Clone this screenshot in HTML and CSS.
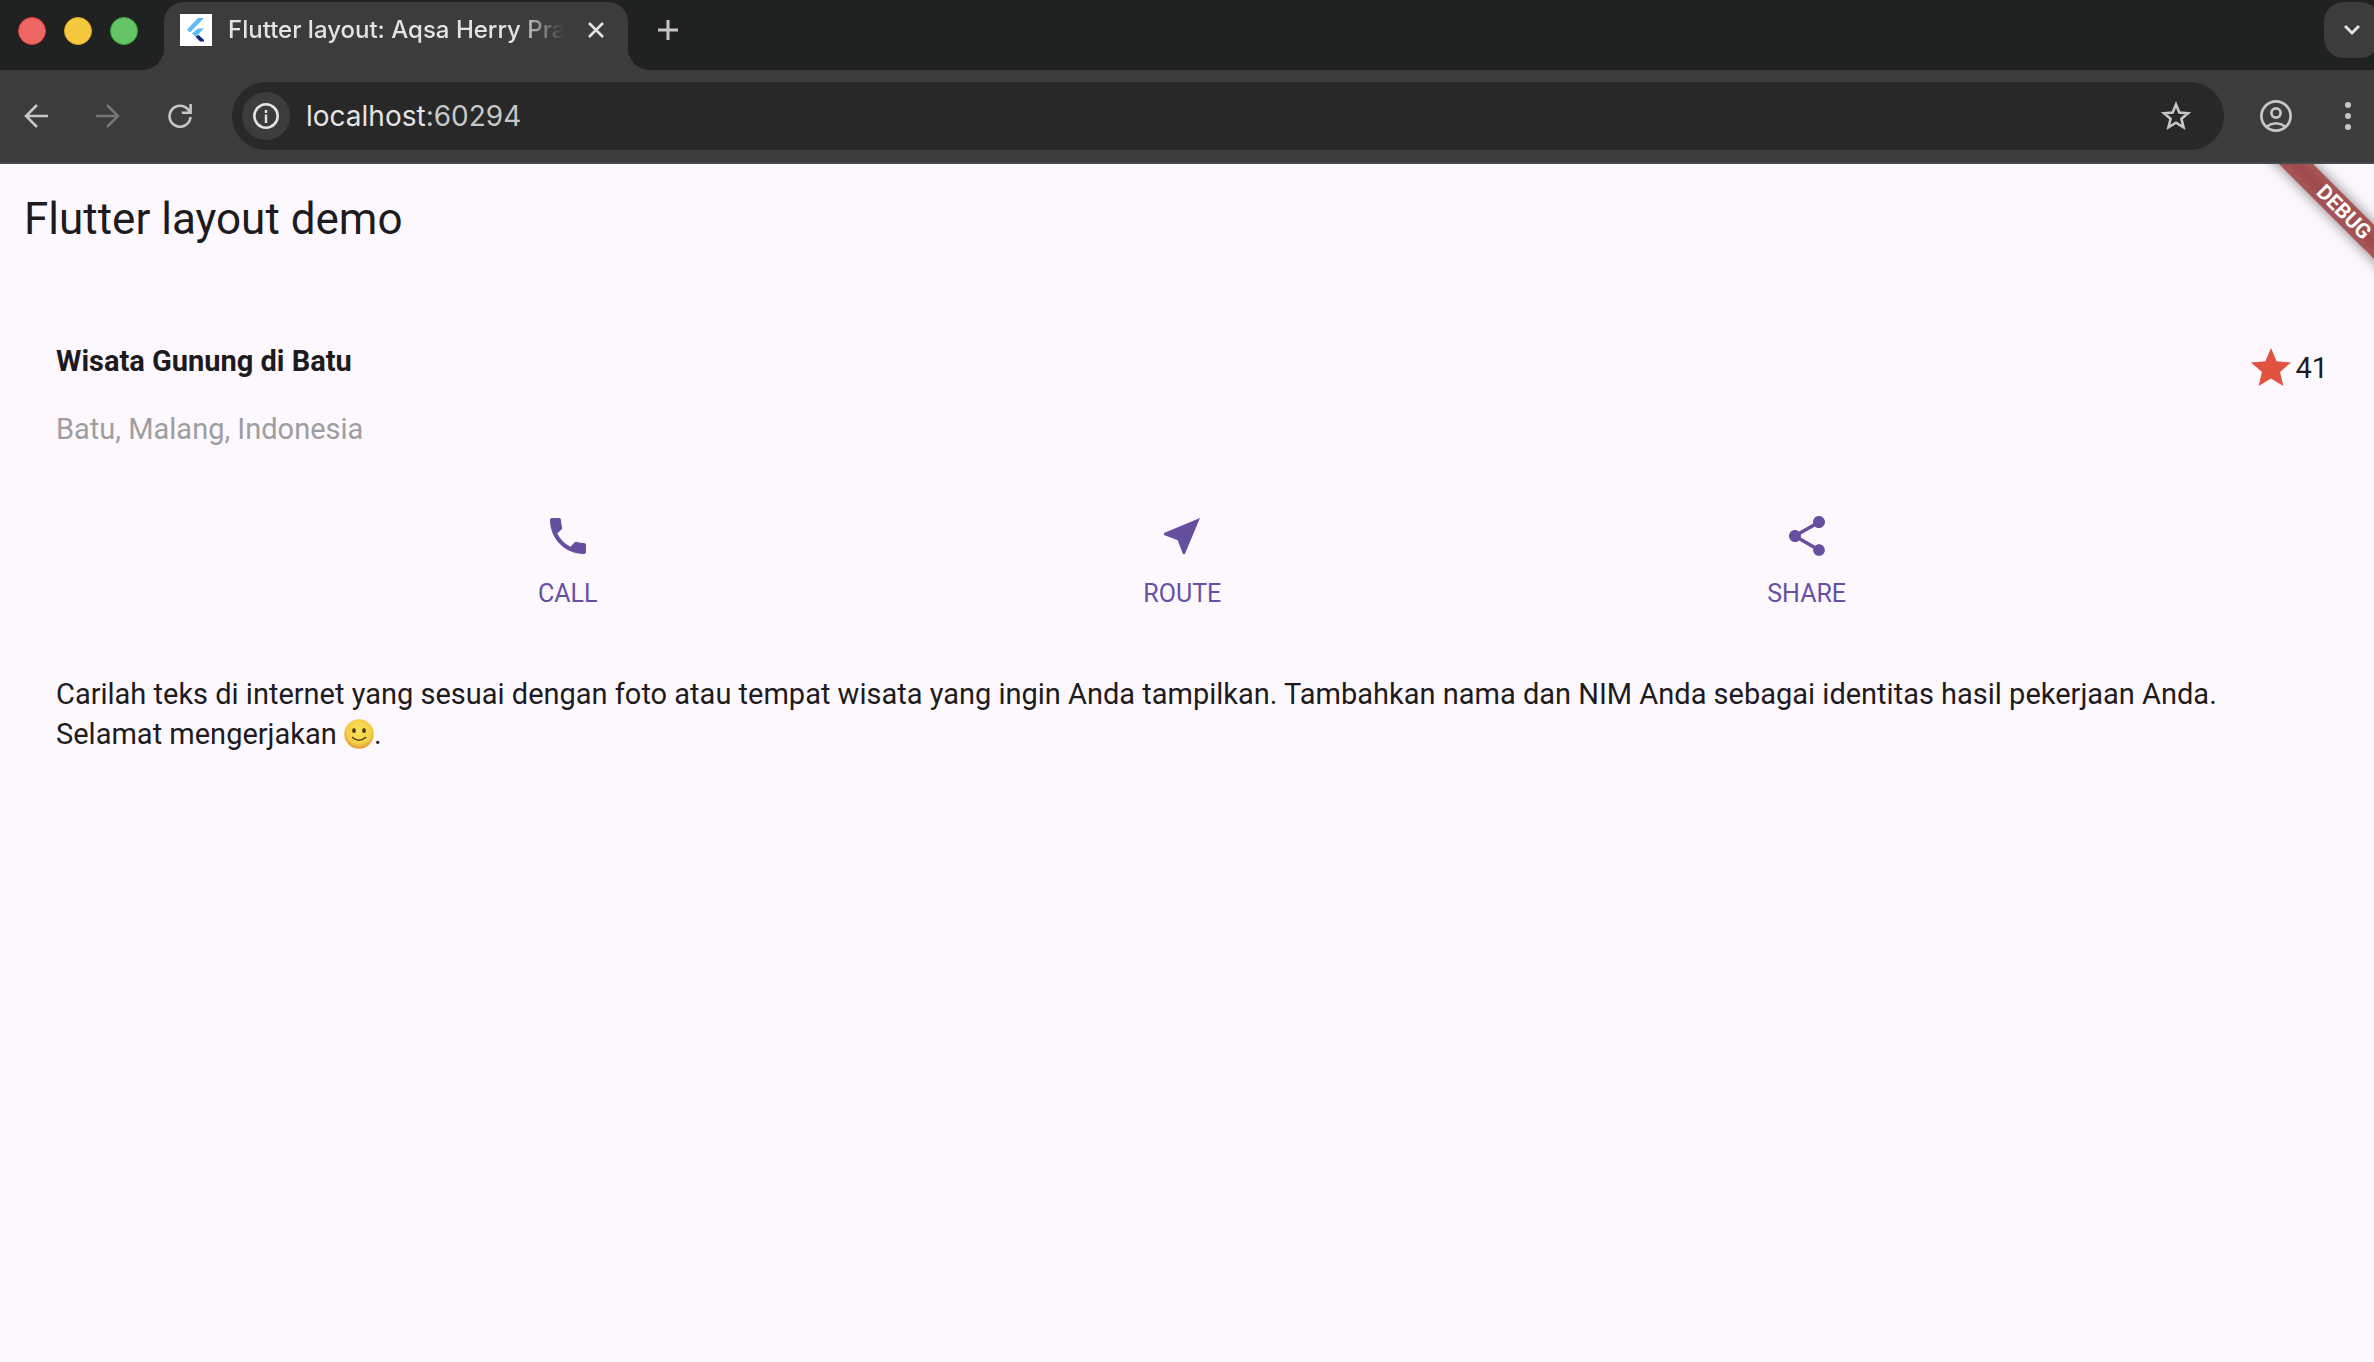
FILE: index.html
```html
<!DOCTYPE html>
<html lang="id">
<head>
<meta charset="utf-8">
<meta name="viewport" content="width=device-width, initial-scale=1">
<title>Flutter layout: Aqsa Herry Pra</title>
<link rel="stylesheet" href="styles.css">
</head>
<body>
<header class="browser">
  <div class="tab-strip">
    <div class="window-controls">
      <button class="dot dot-close" aria-label="Close window"></button>
      <button class="dot dot-min" aria-label="Minimize window"></button>
      <button class="dot dot-max" aria-label="Maximize window"></button>
    </div>
    <div class="tab">
      <svg class="favicon" viewBox="0 0 32 32" aria-hidden="true">
        <rect width="32" height="32" fill="#fff"/>
        <path d="M18 4h6L10 18.500l-3-3z" fill="#5bbcf5"/>
        <path d="M18 14.500h6l-5 5-3.500 3-3.500-3z" fill="#5bbcf5"/>
        <path d="M15.500 22.500l3-1.500 5.500 5v1.500h-4z" fill="#0b1f86"/>
      </svg>
      <span class="tab-title">Flutter layout: Aqsa Herry Pra</span>
      <button class="tab-close" aria-label="Close tab">
        <svg viewBox="0 0 16 16" width="16" height="16"><path d="M1 1l14 14M15 1L1 15" stroke="#e3e3e3" stroke-width="2.600" fill="none"/></svg>
      </button>
    </div>
    <button class="new-tab" aria-label="New tab">
      <svg viewBox="0 0 20 20" width="20" height="20"><path d="M10 0v20M0 10h20" stroke="#c7c7c7" stroke-width="3" fill="none"/></svg>
    </button>
    <button class="tab-search" aria-label="Search tabs">
      <svg viewBox="0 0 16 12" width="16" height="12"><path d="M1 2l7 7 7-7" stroke="#e3e3e3" stroke-width="3" fill="none"/></svg>
    </button>
  </div>
  <div class="toolbar">
    <nav class="history">
      <button aria-label="Back"><svg viewBox="0 0 24 24" width="24" height="24"><path d="M24 12H2M13 1L2 12l11 11" stroke="#c7c7c7" stroke-width="2.600" fill="none"/></svg></button>
      <button aria-label="Forward"><svg viewBox="0 0 24 24" width="24" height="24"><path d="M0 12h22M11 1l11 11-11 11" stroke="#757575" stroke-width="2.600" fill="none"/></svg></button>
      <button aria-label="Reload"><svg viewBox="0 0 24 24" width="24" height="24"><path d="M22.500 13A10.500 10.500 0 1 1 20.500 6l2 2.500M22.600 0v8.700h-8.800" stroke="#c7c7c7" stroke-width="2.600" fill="none"/></svg></button>
    </nav>
    <div class="address">
      <button class="site-info" aria-label="Site information">
        <svg viewBox="0 0 26 26" width="26" height="26"><circle cx="13" cy="13" r="11.700" stroke="#e3e3e3" stroke-width="2.600" fill="none"/><path d="M13 11.500V20M13 7v3" stroke="#e3e3e3" stroke-width="2.400"/></svg>
      </button>
      <a class="url" href="#">localhost<span class="port">:60294</span></a>
      <button class="bookmark" aria-label="Bookmark this tab">
        <svg viewBox="0 0 32 30" width="32" height="30"><path d="M16 3.500l3.300 8 8.700.7-6.600 5.600 2.100 8.500-7.500-4.600-7.500 4.600 2.100-8.500L4 12.200l8.700-.7z" stroke="#c7c7c7" stroke-width="2.600" fill="none"/></svg>
      </button>
    </div>
    <button class="profile" aria-label="Profile">
      <svg viewBox="0 0 32 32" width="32" height="32" fill="none" stroke="#c7c7c7" stroke-width="2.700"><circle cx="16" cy="16" r="14.600"/><circle cx="16" cy="13" r="4.600"/><path d="M6.500 26.500q9.500-6.500 19 0"/></svg>
    </button>
    <button class="menu" aria-label="Browser menu">
      <svg viewBox="0 0 6 28" width="6" height="28" fill="#c7c7c7"><circle cx="3" cy="3" r="3"/><circle cx="3" cy="14" r="3"/><circle cx="3" cy="25" r="3"/></svg>
    </button>
  </div>
</header>
<main class="app">
  <div class="debug-banner">DEBUG</div>
  <div class="app-bar"><h1>Flutter layout demo</h1></div>
  <section class="title-section">
    <div>
      <h2>Wisata Gunung di Batu</h2>
      <p class="place">Batu, Malang, Indonesia</p>
    </div>
    <div class="rating">
      <svg viewBox="0 0 24 24" width="48" height="48" fill="#e25241" aria-hidden="true"><path d="M12 17.270L18.180 21l-1.640-7.030L22 9.240l-7.190-.61L12 2 9.190 8.630 2 9.240l5.460 4.730L5.820 21z"/></svg>
      <span>41</span>
    </div>
  </section>
  <section class="actions">
    <button class="action">
      <svg viewBox="0 0 24 24" width="48" height="48" aria-hidden="true"><path d="M6.620 10.790c1.440 2.830 3.760 5.140 6.590 6.590l2.200-2.200c.27-.27.67-.36 1.020-.24 1.120.37 2.330.57 3.570.57.550 0 1 .450 1 1V20c0 .550-.450 1-1 1-9.390 0-17-7.610-17-17 0-.550.450-1 1-1h3.500c.550 0 1 .450 1 1 0 1.250.200 2.450.570 3.570.110.350.030.740-.250 1.020l-2.200 2.200z"/></svg>
      CALL
    </button>
    <button class="action">
      <svg viewBox="0 0 24 24" width="48" height="48" aria-hidden="true"><path d="M21 3L3 10.530v.98l6.840 2.650L12.480 21h.98L21 3z"/></svg>
      ROUTE
    </button>
    <button class="action">
      <svg viewBox="0 0 24 24" width="48" height="48" aria-hidden="true"><path d="M18 16.080c-.76 0-1.440.3-1.960.77L8.910 12.700c.05-.23.09-.46.09-.7s-.04-.47-.09-.7l7.050-4.110c.54.5 1.250.81 2.040.81 1.660 0 3-1.340 3-3s-1.340-3-3-3-3 1.340-3 3c0 .24.040.47.090.7L8.040 9.810C7.500 9.310 6.790 9 6 9c-1.660 0-3 1.340-3 3s1.340 3 3 3c.79 0 1.500-.31 2.040-.81l7.120 4.160c-.05.21-.08.43-.08.65 0 1.610 1.310 2.920 2.920 2.920s2.920-1.310 2.920-2.920-1.310-2.920-2.920-2.920z"/></svg>
      SHARE
    </button>
  </section>
  <p class="description">Carilah teks di internet yang sesuai dengan foto atau tempat wisata yang ingin Anda tampilkan. Tambahkan nama dan NIM Anda sebagai identitas hasil pekerjaan Anda. Selamat mengerjakan
    <svg class="emoji" viewBox="0 0 30 30" role="img" aria-label="🙂">
      <defs><radialGradient id="face" cx=".5" cy=".42" r=".58"><stop offset="0" stop-color="#f8e35a"/><stop offset=".7" stop-color="#f5cf47"/><stop offset="1" stop-color="#e09a35"/></radialGradient></defs>
      <circle cx="15" cy="15" r="14.700" fill="url(#face)"/>
      <ellipse cx="10" cy="11.500" rx="1.900" ry="2.600" fill="#54381a"/><ellipse cx="20" cy="11.500" rx="1.900" ry="2.600" fill="#54381a"/>
      <path d="M8.500 18.500q6.500 5.500 13 0" fill="none" stroke="#54381a" stroke-width="1.600" stroke-linecap="round"/>
    </svg>.</p>
</main>
</body>
</html>
```
FILE: styles.css
```css
* { box-sizing: border-box; }

body {
  margin: 0;
  min-height: 100vh;
  display: flex;
  flex-direction: column;
  background: #fdf8fe;
  color: #1d1b20;
  font-family: Roboto, sans-serif;
}

button {
  display: flex;
  align-items: center;
  justify-content: center;
  flex: none;
  padding: 0;
  border: 0;
  background: none;
  font: inherit;
  color: inherit;
}

h1, h2, p { margin: 0; font-weight: 400; }
svg { display: block; flex: none; }

/* Browser window */
.browser {
  background: #3c3c3c;
  border-bottom: 2px solid #474948;
  font-family: Inter, sans-serif;
}

.tab-strip {
  display: flex;
  height: 70px;
  background: #202221;
  overflow: hidden;
}

.window-controls {
  display: flex;
  gap: 18px;
  padding: 17px 26px 0 18px;
}

.dot { width: 28px; height: 28px; border-radius: 50%; }
.dot-close { background: #ee6765; border: 1px solid #df3f3e; }
.dot-min { background: #f4c940; border: 1px solid #e0aa1e; }
.dot-max { background: #64c466; border: 1px solid #35a73a; }

.tab {
  position: relative;
  display: flex;
  align-items: center;
  width: 464px;
  margin-top: 2px;
  padding: 0 24px 12px 16px;
  border-radius: 20px 20px 0 0;
  background: #3c3c3c;
}

.tab::before,
.tab::after {
  content: "";
  position: absolute;
  bottom: 0;
  width: 22px;
  height: 22px;
}
.tab::before { right: 100%; background: radial-gradient(circle at 0 0, transparent 22px, #3c3c3c 22px); }
.tab::after { left: 100%; background: radial-gradient(circle at 100% 0, transparent 22px, #3c3c3c 22px); }

.favicon { width: 32px; height: 32px; margin-right: 16px; }

.tab-title {
  flex: 1;
  overflow: hidden;
  white-space: nowrap;
  font-size: 24px;
  font-weight: 500;
  line-height: 32px;
  color: #e3e3e3;
  -webkit-mask-image: linear-gradient(to right, #000 86%, transparent);
  mask-image: linear-gradient(to right, #000 86%, transparent);
}

.tab-close { width: 16px; margin-left: 24px; }
.new-tab { width: 80px; height: 60px; }

.tab-search {
  width: 56px;
  height: 56px;
  margin: 2px -6px 0 auto;
  border-radius: 20px;
  background: #3c3c3c;
}

.toolbar {
  display: flex;
  align-items: center;
  height: 92px;
  padding: 0 23px 0 24px;
}

.history { display: flex; gap: 48px; margin-right: 40px; }

.address {
  display: flex;
  align-items: center;
  flex: 1;
  height: 68px;
  padding: 0 32px 0 10px;
  border-radius: 34px;
  background: #282828;
}

.site-info {
  width: 48px;
  height: 48px;
  border-radius: 50%;
  background: #3c3c3c;
}

.url {
  flex: 1;
  margin-left: 16px;
  font-size: 28px;
  line-height: 36px;
  color: #e3e3e3;
  text-decoration: none;
}
.port { color: #c7c7c7; }
.profile { margin-left: 36px; }
.menu { margin-left: 53px; }

/* Page content */
.app {
  position: relative;
  flex: 1;
  padding: 0 46px 0 56px;
  overflow: hidden;
}

.app-bar { height: 112px; margin: 0 -32px; }
.app-bar h1 { font-size: 44px; line-height: 110px; }

.debug-banner {
  position: absolute;
  top: 36px;
  right: -90px;
  width: 240px;
  height: 24px;
  transform: rotate(45deg);
  background: linear-gradient(#a85656, #9c4a4b 50%, #a85656);
  box-shadow: 0 0 14px rgba(0, 0, 0, .5);
  color: #fff;
  font-size: 21px;
  font-weight: 700;
  line-height: 24px;
  text-align: center;
}

.title-section {
  display: flex;
  justify-content: space-between;
  padding: 64px 0 62px;
  font-size: 29px;
  line-height: 42px;
}
.title-section h2 { margin-bottom: 26px; font-size: 29px; font-weight: 700; }
.place { color: #9e9e9e; }

.rating { display: flex; align-items: center; height: 56px; }

.actions {
  display: flex;
  justify-content: space-evenly;
  margin: 0 -64px;
}

.action {
  flex-direction: column;
  gap: 16px;
  color: #6750a4;
  font-size: 25px;
  line-height: 36px;
}
.action svg { fill: #65509f; }

.description {
  padding: 62px 0;
  font-size: 29px;
  line-height: 40px;
}

.emoji {
  display: inline-block;
  width: 30px;
  height: 30px;
  vertical-align: -5px;
}
```
